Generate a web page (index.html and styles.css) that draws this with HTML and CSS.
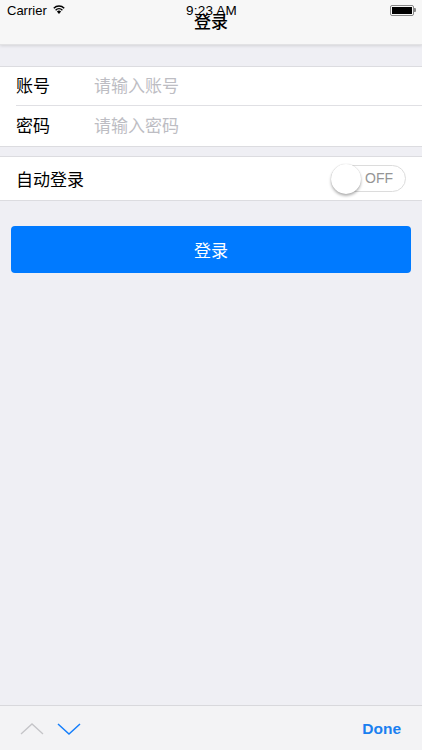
FILE: index.html
```html
<!DOCTYPE html>
<html lang="zh-CN">
<head>
  <meta charset="UTF-8" />
  <title>登录</title>
  <link rel="stylesheet" href="styles.css">
</head>
<body>
  <div class="page">
    <div class="navbar">
      <div class="statusbar">
        <div class="carrier">
          Carrier
          <svg class="wifi" width="12" height="9" viewBox="0 0 12 9">
            <path d="M6 9 L3.9 6.6 A3 3 0 0 1 8.1 6.6 Z" fill="#000"/>
            <path d="M2.6 5.2 A4.9 4.9 0 0 1 9.4 5.2" stroke="#000" stroke-width="1.5" fill="none"/>
            <path d="M0.8 3.2 A7.4 7.4 0 0 1 11.2 3.2" stroke="#000" stroke-width="1.5" fill="none"/>
          </svg>
        </div>
        <div class="time">9:23 AM</div>
        <div class="battery">
          <span class="battery-body"><span class="battery-level"></span></span>
          <span class="battery-tip"></span>
        </div>
      </div>
      <div class="title">登录</div>
    </div>

    <div class="group">
      <div class="row row-first">
        <label for="account">账号</label>
        <input type="text" id="account" placeholder="请输入账号" />
      </div>
      <div class="row">
        <label for="password">密码</label>
        <input type="password" id="password" placeholder="请输入密码" />
      </div>
    </div>

    <div class="group group-switch">
      <div class="row row-tall">
        <span class="row-label">自动登录</span>
        <div class="switch">
          <span class="knob"></span>
          <span class="switch-text">OFF</span>
        </div>
      </div>
    </div>

    <button class="login-btn">登录</button>

    <div class="spacer"></div>

    <div class="toolbar">
      <div class="arrows">
        <svg width="24" height="14" viewBox="0 0 24 14">
          <polyline points="1,12 12,2 23,12" fill="none" stroke="#c4c4c8" stroke-width="1.3"/>
        </svg>
        <svg width="24" height="14" viewBox="0 0 24 14">
          <polyline points="1,2 12,12 23,2" fill="none" stroke="#147efb" stroke-width="1.5"/>
        </svg>
      </div>
      <span class="done">Done</span>
    </div>
  </div>
</body>
</html>
```

FILE: styles.css
```css
* {
  box-sizing: border-box;
}

body {
  margin: 0;
  background: #efeff4;
  font-family: "Liberation Sans", "Noto Sans CJK SC", sans-serif;
  color: #000;
}

.page {
  height: 750px;
  display: flex;
  flex-direction: column;
}

.navbar {
  height: 45px;
  background: #f7f7f7;
  box-shadow: 0 1px 3px rgba(0,0,0,0.12);
  border-bottom: 1px solid #e2e2e4;
}

.statusbar {
  height: 20px;
  display: flex;
  align-items: center;
  justify-content: space-between;
  padding: 0 7px;
  font-size: 13px;
}

.carrier {
  width: 80px;
  display: flex;
  align-items: center;
  gap: 6px;
}

.wifi {
  margin-top: -2px;
}

.time {
  font-size: 13.5px;
  letter-spacing: 0.2px;
}

.battery {
  width: 80px;
  display: flex;
  justify-content: flex-end;
  align-items: center;
  margin-right: -1px;
}

.battery-body {
  width: 24px;
  height: 11px;
  border: 1px solid #888;
  border-radius: 2px;
  padding: 1px;
  display: block;
}

.battery-level {
  display: block;
  width: 100%;
  height: 100%;
  background: #000;
}

.battery-tip {
  width: 2px;
  height: 4px;
  background: #888;
  border-radius: 0 1px 1px 0;
}

.title {
  margin-top: -9px;
  text-align: center;
  font-family: "Noto Sans CJK SC", sans-serif;
  font-size: 17px;
  font-weight: 500;
  line-height: 20px;
}

.group {
  margin-top: 21px;
  background: #fff;
  border-top: 1px solid #dcdce0;
  border-bottom: 1px solid #dcdce0;
}

.group-switch {
  margin-top: 9px;
}

.row {
  height: 41px;
  display: flex;
  align-items: center;
  margin-left: 16px;
  padding-bottom: 3px;
  font-family: "Noto Sans CJK SC", sans-serif;
  font-size: 17px;
}

.row-first {
  height: 38px;
}

.row + .row {
  border-top: 1px solid #e0e0e4;
}

.row label {
  width: 78px;
}

.row input {
  flex: 1;
  border: none;
  outline: none;
  padding: 0;
  font-family: "Noto Sans CJK SC", sans-serif;
  font-size: 17px;
  background: transparent;
}

.row input::placeholder {
  color: #bdbdc3;
}

.row-tall {
  height: 43px;
  justify-content: space-between;
  padding-right: 16px;
  padding-bottom: 1px;
}

.switch {
  position: relative;
  width: 75px;
  height: 27px;
  border: 1px solid #dcdcdc;
  border-radius: 14px;
  background: #fff;
  display: flex;
  align-items: center;
  justify-content: flex-end;
  padding-right: 12px;
}

.knob {
  position: absolute;
  left: -1px;
  top: -2px;
  width: 30px;
  height: 30px;
  border-radius: 50%;
  background: #fff;
  box-shadow: 0 2px 3px rgba(0,0,0,0.3), 0 0 1px rgba(0,0,0,0.2);
}

.switch-text {
  font-family: "Liberation Sans", sans-serif;
  font-size: 14px;
  color: #959595;
}

.login-btn {
  margin: 25px 11px 0;
  height: 47px;
  background: #007aff;
  color: #fff;
  border: none;
  border-radius: 4px;
  padding-bottom: 2px;
  font-family: "Noto Sans CJK SC", sans-serif;
  font-size: 17px;
  cursor: pointer;
}

.spacer {
  flex: 1;
}

.toolbar {
  height: 45px;
  background: #f3f3f5;
  border-top: 1px solid #d8d8dc;
  display: flex;
  align-items: center;
  justify-content: space-between;
  padding: 0 21px 0 20px;
}

.arrows {
  display: flex;
  gap: 13px;
  margin-top: 1px;
}

.done {
  font-family: "Liberation Sans", sans-serif;
  font-size: 15.5px;
  font-weight: bold;
  color: #1a7ff0;
  margin-top: 2px;
}
```
